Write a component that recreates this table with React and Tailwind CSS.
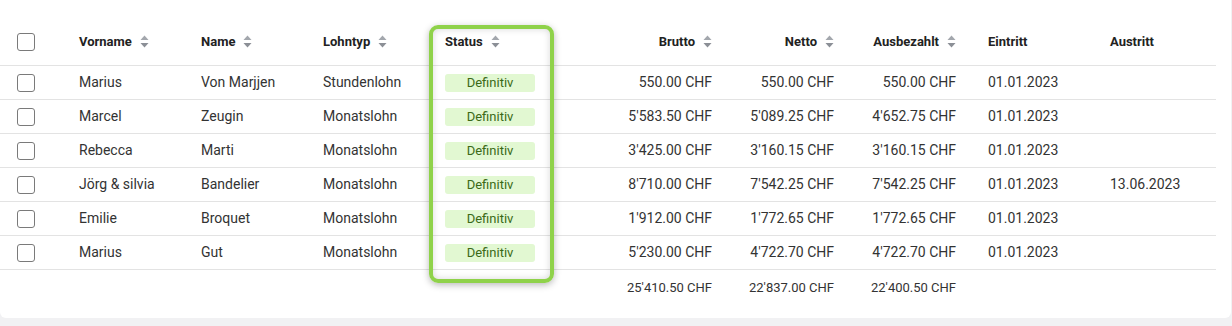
import React from "react";

const rows = [
  { vorname: "Marius", name: "Von Marjjen", typ: "Stundenlohn", brutto: "550.00 CHF", netto: "550.00 CHF", aus: "550.00 CHF", ein: "01.01.2023", austritt: "" },
  { vorname: "Marcel", name: "Zeugin", typ: "Monatslohn", brutto: "5'583.50 CHF", netto: "5'089.25 CHF", aus: "4'652.75 CHF", ein: "01.01.2023", austritt: "" },
  { vorname: "Rebecca", name: "Marti", typ: "Monatslohn", brutto: "3'425.00 CHF", netto: "3'160.15 CHF", aus: "3'160.15 CHF", ein: "01.01.2023", austritt: "" },
  { vorname: "Jörg & silvia", name: "Bandelier", typ: "Monatslohn", brutto: "8'710.00 CHF", netto: "7'542.25 CHF", aus: "7'542.25 CHF", ein: "01.01.2023", austritt: "13.06.2023" },
  { vorname: "Emilie", name: "Broquet", typ: "Monatslohn", brutto: "1'912.00 CHF", netto: "1'772.65 CHF", aus: "1'772.65 CHF", ein: "01.01.2023", austritt: "" },
  { vorname: "Marius", name: "Gut", typ: "Monatslohn", brutto: "5'230.00 CHF", netto: "4'722.70 CHF", aus: "4'722.70 CHF", ein: "01.01.2023", austritt: "" },
];

const cols =
  "grid grid-cols-[67px_122px_122px_122px_122px_169px_122px_122px_130px_118px] w-[1216px] items-center";

const SortIcon = () => (
  <svg width="9" height="13" viewBox="0 0 9 13" className="ml-2 shrink-0">
    <path d="M4.5 0.5 L8.5 5 L0.5 5 Z" fill="#a3a7ad" />
    <path d="M0.5 8 L8.5 8 L4.5 12.5 Z" fill="#8b8f96" />
  </svg>
);

const Checkbox = () => (
  <div className="w-[18px] h-[18px] rounded-[3px] border-[1.5px] border-[#7a7a7a] bg-white ml-[17px]" />
);

const Head = ({ children, sort, right, pad = "px-3" }) => (
  <div className={`flex items-center ${pad} ${right ? "justify-end" : ""}`}>
    <span className="text-[13px] font-bold text-[#222]">{children}</span>
    {sort && <SortIcon />}
  </div>
);

const Cell = ({ children, right, pad = "px-3" }) => (
  <div className={`${pad} text-[14px] text-[#333] whitespace-nowrap ${right ? "text-right" : ""}`}>
    {children}
  </div>
);

export default function App() {
  return (
    <div className="w-[1232px] h-[326px] bg-[#f1f1f3] overflow-hidden" style={{ fontFamily: "Roboto, 'Liberation Sans', sans-serif" }}>
      <div className="relative w-[1231px] h-[318px] bg-white rounded-b-md pt-[18px]">
        {/* header */}
        <div className={`${cols} h-[48px] border-b border-[#e3e3e3]`}>
          <Checkbox />
          <Head sort>Vorname</Head>
          <Head sort>Name</Head>
          <Head sort>Lohntyp</Head>
          <Head sort>Status</Head>
          <Head sort right>Brutto</Head>
          <Head sort right>Netto</Head>
          <Head sort right>Ausbezahlt</Head>
          <Head pad="pl-5">Eintritt</Head>
          <Head>Austritt</Head>
        </div>

        {/* rows */}
        {rows.map((r, i) => (
          <div key={i} className={`${cols} h-[34px] border-b border-[#e3e3e3]`}>
            <Checkbox />
            <Cell>{r.vorname}</Cell>
            <Cell>{r.name}</Cell>
            <Cell>{r.typ}</Cell>
            <div className="px-3">
              <div className="w-[90px] h-[18px] rounded-[3px] bg-[#e2f8d2] text-[#3b6a17] text-[13px] leading-[18px] text-center">
                Definitiv
              </div>
            </div>
            <Cell right>{r.brutto}</Cell>
            <Cell right>{r.netto}</Cell>
            <Cell right>{r.aus}</Cell>
            <Cell pad="pl-5">{r.ein}</Cell>
            <Cell>{r.austritt}</Cell>
          </div>
        ))}

        {/* totals */}
        <div className={`${cols} h-[34px]`}>
          <div />
          <div />
          <div />
          <div />
          <div />
          <Cell right>
            <span className="text-[13px]">25'410.50 CHF</span>
          </Cell>
          <Cell right>
            <span className="text-[13px]">22'837.00 CHF</span>
          </Cell>
          <Cell right>
            <span className="text-[13px]">22'400.50 CHF</span>
          </Cell>
          <div />
          <div />
        </div>

        {/* highlight on status column */}
        <div className="absolute left-[429px] top-[25px] w-[125px] h-[258px] rounded-[9px] border-[4px] border-[#8fd24a] shadow-[0_2px_7px_rgba(0,0,0,0.28),inset_0_0_7px_rgba(0,0,0,0.16)] pointer-events-none" />
      </div>
    </div>
  );
}
